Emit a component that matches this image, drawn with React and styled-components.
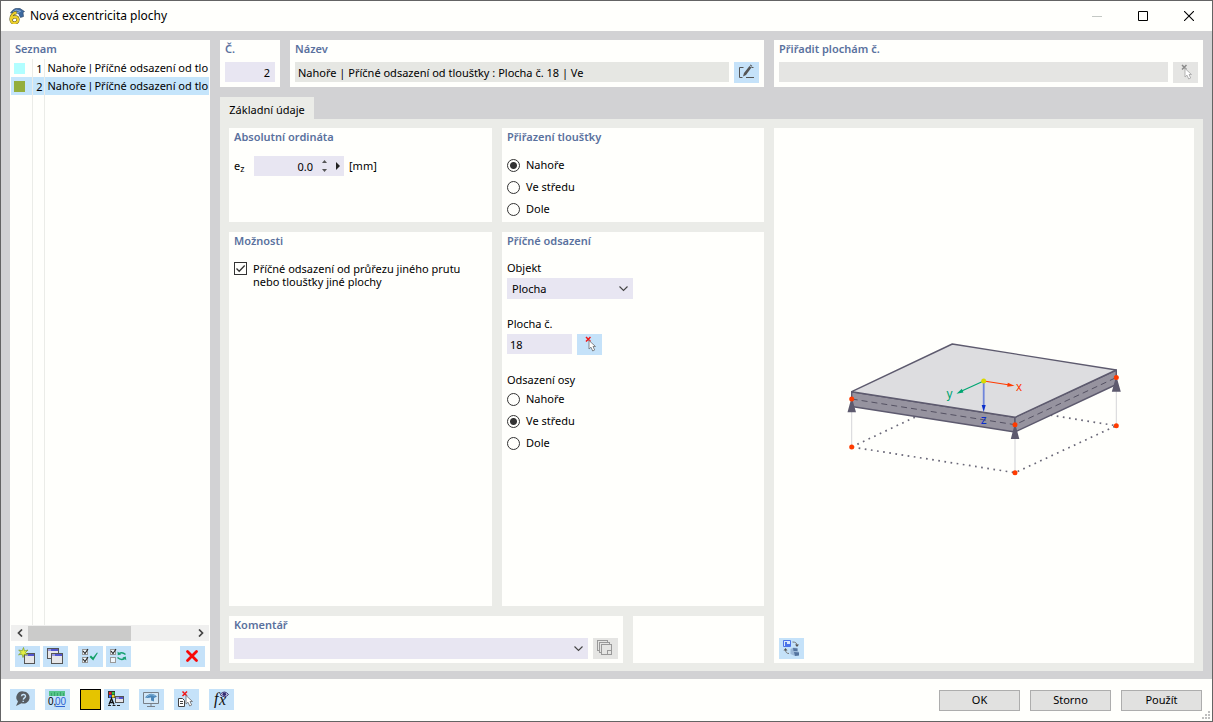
import React, { useState } from "react";
import styled, { createGlobalStyle } from "styled-components";

const GlobalStyle = createGlobalStyle`
  * {
    box-sizing: border-box;
  }

  body {
    margin: 0;
    color: #000;
    font-family: "Noto Sans", "Open Sans", sans-serif;
    font-size: 11px;
    line-height: 14px;
  }

  button,
  input,
  select {
    font: inherit;
    color: inherit;
    border: 0;
    border-radius: 0;
    margin: 0;
    padding: 0;
  }
`;

const Window = styled.div`
  display: flex;
  flex-direction: column;
  min-height: 100vh;
  border: 1px solid #646464;
  background: #fffffc;
`;

const TitleBar = styled.header`
  display: flex;
  align-items: center;
  height: 30px;
  padding-left: 8px;
`;

const WindowTitle = styled.h1`
  flex: 1;
  margin: 0 0 0 5px;
  font-size: 12px;
  font-weight: normal;
`;

const WindowButton = styled.button`
  display: flex;
  align-items: center;
  justify-content: center;
  width: 46px;
  height: 30px;
  background: none;
`;

const Body = styled.main`
  flex: 1;
  display: flex;
  gap: 10px;
  padding: 9px;
  padding-bottom: 8px;
  background: #d2d2d4;
`;

const Columns = styled.div`
  flex: ${p => (p.$grow ? "1" : "none")};
  display: grid;
  grid-template-columns: ${p => p.$columns};
  gap: 10px;
  min-height: ${p => p.$height || "0"};
`;

const Panel = styled.section`
  display: flex;
  flex-direction: column;
  min-width: 0;
  padding: 0 5px;
  background: #fffffc;
`;

const PanelTitle = styled.h2`
  margin: 0;
  padding: 1px 0 3px;
  color: #5a719e;
  font-size: 11px;
  font-weight: 600;
  line-height: 15px;
`;

const ListPanel = styled(Panel)`
  flex: none;
  width: 200px;
  padding: 0 1px;
`;

const ListTitle = styled(PanelTitle)`
  padding-left: 4px;
`;

const ListArea = styled.div`
  flex: 1;
  display: flex;
  overflow: hidden;
`;

const List = styled.table`
  width: 198px;
  table-layout: fixed;
  border-collapse: collapse;
`;

const ListRow = styled.tr`
  height: ${p => (p.$filler ? "auto" : "18px")};
  background: ${p => (p.$selected ? "#c5e5fb" : "none")};
`;

const ListCell = styled.td`
  width: ${p => p.$width || "auto"};
  padding: 1px 0 0 3px;
  border-right: ${p => (p.$last ? "0" : "1px solid #ebece8")};
  white-space: nowrap;
  text-align: ${p => p.$align || "left"};
`;

const Bar = styled.span`
  font-family: Roboto, sans-serif;
`;

const Swatch = styled.span`
  display: block;
  width: 11px;
  height: 11px;
  background: ${p => p.$color};
`;

const ScrollBar = styled.div`
  display: flex;
  align-items: center;
  height: 16px;
  background: #f0f0ef;
`;

const ScrollButton = styled.button`
  display: flex;
  align-items: center;
  justify-content: center;
  width: 17px;
  height: 16px;
  background: none;
`;

const ScrollTrack = styled.div`
  flex: 1;
  height: 15px;
`;

const ScrollThumb = styled.div`
  width: 103px;
  height: 15px;
  background: #cbcbca;
`;

const ListTools = styled.div`
  display: flex;
  gap: 3px;
  padding: 5px 4px 4px;
`;

const IconButton = styled.button`
  flex: none;
  display: block;
  width: 25px;
  height: 21px;
  margin-left: ${p => p.$gap || "0"};
  background: ${p => (p.disabled ? "#e5e5e3" : "#c5e2f9")};

  svg {
    display: block;
  }
`;

const Content = styled.div`
  flex: 1;
  display: flex;
  flex-direction: column;
  min-width: 0;
`;

const FieldRow = styled.div`
  display: flex;
  gap: 5px;
  margin-top: 3px;
`;

const TextInput = styled.input`
  width: ${p => p.$width || "100%"};
  min-width: 0;
  height: 20px;
  padding: 0 5px 0 3px;
  outline: none;
  text-align: ${p => p.$align || "left"};
  background: ${p => p.$background || "#e8e6f2"};
`;

const Tabs = styled.div`
  display: flex;
  margin-top: 10px;
`;

const Tab = styled.button`
  width: 94px;
  height: 22px;
  padding-top: 3px;
  background: #ebece8;
`;

const TabPage = styled.div`
  flex: 1;
  display: flex;
  flex-direction: column;
  padding: 9px 9px 8px;
  background: #ebece8;
`;

const Form = styled.div`
  display: flex;
  flex-direction: column;
  gap: 10px;
`;

const OrdinateRow = styled.div`
  display: flex;
  align-items: center;
  margin-top: 9px;
`;

const OrdinateLabel = styled.label`
  width: 20px;

  sub {
    font-size: 9px;
    line-height: 8px;
    vertical-align: -2px;
  }
`;

const Spinner = styled.div`
  display: flex;
  align-items: center;
  width: 90px;
  margin-right: 5px;
  background: #e8e6f2;
`;

const SpinnerButtons = styled.div`
  display: flex;
  flex-direction: column;
  width: 13px;
`;

const ArrowButton = styled.button`
  display: flex;
  align-items: center;
  justify-content: center;
  width: 13px;
  height: ${p => (p.$half ? "9px" : "18px")};
  background: none;
`;

const Choices = styled.div`
  display: flex;
  flex-direction: column;
  margin-top: ${p => p.$top || "0"};
`;

const Choice = styled.label`
  display: flex;
  align-items: center;
  gap: 6px;
  height: 22px;
`;

const Radio = styled.input`
  appearance: none;
  width: 13px;
  height: 13px;
  border: 1px solid #333;
  border-radius: 50%;
  background: ${p => (p.checked ? "radial-gradient(circle, #333 3px, #fffffc 4px)" : "#fffffc")};
`;

const CheckLabel = styled.label`
  display: flex;
  gap: 6px;
  margin-top: 11px;
  line-height: 13px;

  span {
    width: 216px;
  }
`;

const CheckBox = styled.input`
  flex: none;
  appearance: none;
  width: 13px;
  height: 13px;
  border: 1px solid #333;
  background: #fffffc;

  &:checked {
    background: url("data:image/svg+xml,%3Csvg xmlns='http://www.w3.org/2000/svg' viewBox='0 0 11 11'%3E%3Cpath d='M1.5 5.5l2.7 2.8L9.7 2.5' fill='none' stroke='%23333' stroke-width='1.3'/%3E%3C/svg%3E");
  }
`;

const FieldLabel = styled.label`
  display: block;
  margin-top: ${p => p.$top || "0"};
  line-height: 15px;
`;

const Select = styled.select`
  appearance: none;
  width: ${p => p.$width || "100%"};
  min-width: 0;
  height: 21px;
  padding: 1px 20px 0 5px;
  outline: none;
  background: #e8e6f2
    url("data:image/svg+xml,%3Csvg xmlns='http://www.w3.org/2000/svg' width='9' height='6'%3E%3Cpath d='M.5.5l4 4 4-4' fill='none' stroke='%23444' stroke-width='1.1'/%3E%3C/svg%3E")
    no-repeat right 5px center;
`;

const Preview = styled(Panel)`
  justify-content: space-between;
  padding-bottom: 4px;
`;

const Drawing = styled.div`
  flex: 1;
  display: flex;
  align-items: center;
  justify-content: center;
`;

const Footer = styled.footer`
  position: relative;
  display: flex;
  align-items: center;
  gap: 10px;
  height: 42px;
  padding: 0 10px 0 9px;
`;

const Tools = styled.div`
  flex: 1;
  display: flex;
  gap: 10px;
  padding-bottom: 2px;
`;

const ToolGroup = styled.div`
  display: flex;
  gap: 3px;
`;

const ColorButton = styled.button`
  width: 21px;
  height: 21px;
  border: 1px solid #000;
  background: #e5c400;
`;

const DialogButton = styled.button`
  width: 81px;
  height: 21px;
  border: 1px solid #adadad;
  background: #e1e1e0;
`;

const Grip = styled.svg`
  position: absolute;
  right: 2px;
  bottom: 2px;
`;

const Icon = ({ children }) => (
  <svg width="25" height="21" viewBox="0 0 25 21" aria-hidden="true">
    {children}
  </svg>
);

const AppIcon = () => (
  <svg width="16" height="16" viewBox="0 0 16 16" aria-hidden="true">
    <path d="M1.500 5Q5-1 11 .5l4.500 3-1.500 1 .5 4-3 1-2-4-5-1z" fill="#3d6aa0" stroke="#29405e" strokeWidth=".6" />
    <path d="M4 4l3-2 4 1M8 5l4-2" stroke="#9dbbe0" fill="none" strokeWidth=".8" />
    <path
      d="M7.500 4.700C4 5 2 8 2 11c0 2.500 1.500 4 3.300 4 2.200 0 3.700-1.500 3.700-3.500S7.500 8.800 6 8.800C4.500 8.800 3 10 2.700 11"
      fill="none"
      stroke="#5f5a20"
      strokeWidth="3.200"
    />
    <path
      d="M7.500 4.700C4 5 2 8 2 11c0 2.500 1.500 4 3.300 4 2.200 0 3.700-1.500 3.700-3.500S7.500 8.800 6 8.800C4.500 8.800 3 10 2.700 11"
      fill="none"
      stroke="#edd02b"
      strokeWidth="2.200"
    />
  </svg>
);

const MiniWindow = ({ x, y, w = 11, h = 11 }) => (
  <g shapeRendering="crispEdges">
    <rect x={x + 0.5} y={y + 0.5} width={w - 1} height={h - 1} fill="#e6e6e8" stroke="#555" />
    <rect x={x + 1} y={y + 1} width={w - 2} height="2" fill="#5356cf" />
    <rect x={x + 1} y={y + 1} width="3" height="2" fill="#9b9ce0" />
  </g>
);

const TickBox = ({ y, checked }) => (
  <g fill="none">
    <rect x="4.500" y={y + 0.5} width="5" height="5" fill="#eef6fc" stroke="#999" />
    {checked && <path d={`M5 ${y + 2}l2 2.500 3-4.500`} stroke="#222" strokeWidth="1.100" />}
  </g>
);

const PickIcon = ({ disabled }) => (
  <Icon>
    <path d="M9 3l4.500 4.500M13.500 3L9 7.500" stroke={disabled ? "#8a8a8a" : "#f21616"} strokeWidth="1.500" />
    <path
      d="M12 6.500v8.500l2-1.800 1.700 3.800 2-1-1.700-3.500h2.500z"
      fill="#fff"
      stroke={disabled ? "#aaa" : "#77797d"}
      strokeWidth=".9"
    />
  </Icon>
);

const EditIcon = () => (
  <Icon>
    <path d="M9.500 5.500h-4v10h3M12 15.500h8M17.500 5.500h2" fill="none" stroke="#555" />
    <path d="M9 14.500l1-3.500L15.500 4l2 1.500L12 13z" fill="#555" />
    <path d="M15.800 3.300l.8-.8 1.800 1.400-.6.900z" fill="#555" />
  </Icon>
);

const NewIcon = () => (
  <Icon>
    <MiniWindow x={9} y={7} />
    <path
      d="M8.500 1.500l1 3.500L13 4l-2.500 2.500L12.500 9 9.300 8.300 8 11.500 7 8.200l-3.500.6L6 6.500 3.700 4l3.500.8z"
      fill="#e3ef45"
      stroke="#7c9b24"
      strokeWidth=".7"
    />
  </Icon>
);

const CopyIcon = () => (
  <Icon>
    <MiniWindow x={4} y={2} w={12} />
    <MiniWindow x={8} y={7} w={12} />
  </Icon>
);

const CheckAllIcon = () => (
  <Icon>
    <TickBox y={3} checked />
    <TickBox y={11} checked />
    <path d="M11.500 11l1.500-1.500 2 2 4-5 .8.5L15.200 14.500z" fill="#12a066" />
  </Icon>
);

const InvertIcon = () => (
  <Icon>
    <TickBox y={3} checked />
    <TickBox y={11} />
    <path d="M19.500 8.500C17 6.300 15 6.300 13 7.700M11.500 11.500c2.500 2.300 5 2.300 7 1" fill="none" stroke="#16a070" strokeWidth="1.500" />
    <path d="M11.500 5.500l.3 3.700 3.300-.7zM20.300 14.300l-.5-3.700-3.300 1z" fill="#16a070" />
  </Icon>
);

const DeleteIcon = () => (
  <Icon>
    <path d="M7.500 5.500l9 9M16.500 5.500l-9 9" stroke="#f80808" strokeWidth="2.800" strokeLinecap="round" />
  </Icon>
);

const NotesIcon = () => (
  <Icon>
    <g fill="#e5e5e3" stroke="#999" shapeRendering="crispEdges">
      <path d="M4.500 2.500h10v10h-10z" />
      <path d="M6.500 4.500h10v10h-10z" />
      <path d="M8.500 6.500h10v10h-10z" />
      <path d="M14.500 16.500v-4h4" />
    </g>
  </Icon>
);

const ViewIcon = () => (
  <Icon>
    <path d="M4.500 2.500h7v6h-7z" fill="#d9e9fb" stroke="#4b73e8" />
    <path d="M6 4h2v2h3v2H6z" fill="#4b73e8" />
    <path d="M13.500 4c3 0 4.500 1 4.500 3.500M10 15.500c-2.500 0-3.500-1.500-3.500-4" fill="none" stroke="#777" />
    <path d="M16 6.500h4L18 9zM4.500 12.500h4l-2-2.500z" fill="#555" />
    <path d="M11.500 11l3-1.500 4 .5v3l1.500 1v3l-4 1-4.500-2z" fill="#9db9d8" />
    <path d="M14 10l4.500.5v2.500h-4zM15 14l5 .5v3l-4 .5z" fill="#54749f" />
  </Icon>
);

const HelpIcon = () => (
  <Icon>
    <path d="M13.500 2.500a6.200 6 0 1 1-2 11.700L6 17l2-4.500A6 6 0 0 1 13.500 2.500z" fill="#575d63" />
    <path d="M11.500 7.200c.2-2.500 4.300-2.200 4 .2-.2 1.500-2 1.500-2.200 3.200M13.200 11.700v1.300" fill="none" stroke="#c5e2f9" strokeWidth="1.400" />
  </Icon>
);

const UnitsText = styled.text`
  font: 10px "Liberation Sans", sans-serif;
`;

const UnitsIcon = () => (
  <Icon>
    <path d="M4 2h16v5H4z" fill="#55c589" />
    <path d="M6.500 4v3M9.500 3v4M12.500 4v3M15.500 3v4M18.500 4v3" stroke="#3aa56d" />
    <UnitsText x="3" y="16">0,</UnitsText>
    <UnitsText x="10" y="16" fill="#2e63d0">00</UnitsText>
    <path d="M10.500 17.500H20" stroke="#2e63d0" />
  </Icon>
);

const DisplayIcon = () => (
  <Icon>
    <path d="M4 2h7v7H4z" fill="#333" />
    <path d="M5 3h2.500v2.500H5z" fill="#e22" />
    <path d="M8 3h2.500v2.500H8z" fill="#2cc33a" />
    <path d="M5 6h2.500v2.500H5z" fill="#36f" />
    <path d="M8 6h2.500v2.500H8z" fill="#f2d51e" />
    <path d="M5 15.500l2.500-6 2.500 6M6 13.500h3" fill="none" stroke="#111" strokeWidth="1.300" />
    <path d="M4 16.500h3M8.500 16.500h3M13 16.500h3" stroke="#222" />
    <MiniWindow x={11} y={7} w={9} h={7} />
  </Icon>
);

const MonitorIcon = () => (
  <Icon>
    <path d="M4.500 3.500h15v11h-15z" fill="#d2e7f7" stroke="#777f88" />
    <path d="M12 15v2M8 17.500h8" stroke="#777f88" fill="none" />
    <path d="M6 8.500Q12 1.500 18 7.500l-3 1.500v3.500l-3-1V8.500L8.500 9z" fill="#4c86b8" />
    <path d="M7.500 8Q12 4 16 7" fill="none" stroke="#85b6dc" />
  </Icon>
);

const PickListIcon = () => (
  <Icon>
    <path d="M8.500 2.500l4.500 4.500M13 2.500L8.500 7" stroke="#f21616" strokeWidth="1.500" />
    <path d="M4.500 9.500h4l2 2v6h-6z" fill="#fff" stroke="#444" />
    <path d="M6 12.500h3M6 14.500h3" stroke="#444" />
    <path d="M12 6.500v8.500l2-1.800 1.700 3.800 2-1-1.700-3.500h2.500z" fill="#fff" stroke="#77797d" strokeWidth=".9" />
  </Icon>
);

const FormulaText = styled.text`
  font: italic 16px "Liberation Serif", serif;
`;

const FormulaIcon = () => (
  <Icon>
    <FormulaText x="5" y="15" fill="#111">f</FormulaText>
    <FormulaText x="10" y="16" fill="#111">x</FormulaText>
    <path d="M11 5.500q4.500-5 8.500 0-4 4.500-8.500 0z" fill="#c9cbe8" stroke="#403a78" />
    <circle cx="15.300" cy="5.300" r="1.800" fill="#312a72" />
  </Icon>
);

const AxisText = styled.text`
  font: 12px "Liberation Sans", sans-serif;
  text-anchor: middle;
`;

const SlabDrawing = () => (
  <svg width="308" height="214" viewBox="0 -54 308 214" role="img" aria-label="Excentricita plochy">
    <path
      d="M21.700 117L122.300 69.500 286.300 95.700 185 142.700z"
      fill="none"
      stroke="#6a6878"
      strokeWidth="1.700"
      strokeDasharray="1.700 4.500"
    />
    <path d="M21.700 69v48M185 95v47.500M286.300 48v47.500" stroke="#d5d5d8" />
    <g stroke="#5d5a6e" strokeWidth="1.400" strokeLinejoin="round">
      <path d="M21.700 61.700L185 87.300v14.700L21.700 76.500z" fill="#96939f" />
      <path d="M185 87.300L286.300 40v14.500L185 102z" fill="#96939f" />
      <path d="M21.700 61.700L122.300 14l164 26L185 87.300z" fill="#dddde0" />
    </g>
    <path d="M21.700 69L185 94.700l101.300-47.200" fill="none" stroke="#555263" strokeDasharray="6 4" />
    <path d="M21.700 67l4.300 15.300h-8.500zM185 93l4.300 16h-8.500zM286.300 46l4.500 15.800h-9z" fill="#5d5a6e" />
    <g fill="#ff3b00">
      <circle cx="21.700" cy="69" r="2.500" />
      <circle cx="185" cy="94.700" r="2.500" />
      <circle cx="286.300" cy="47.500" r="2.500" />
      <circle cx="21.700" cy="117" r="2.500" />
      <circle cx="185" cy="142.700" r="2.500" />
      <circle cx="286.300" cy="95.700" r="2.500" />
    </g>
    <path d="M153.700 51l26 4" stroke="#ff3b00" strokeWidth="1.200" />
    <path d="M184.500 55.800l-7.300 1 .6-4z" fill="#ff3b00" />
    <path d="M153.700 51l-22 10" stroke="#00a572" strokeWidth="1.200" />
    <path d="M126.500 63.800l5.300-5 1.700 3.800z" fill="#00a572" />
    <path d="M153.700 51v25" stroke="#6f85da" strokeWidth="1.800" />
    <path d="M153.700 82l-2-7h4z" fill="#0a2ecb" />
    <circle cx="153.700" cy="51" r="2.500" fill="#d9d900" />
    <AxisText x="189" y="61" fill="#ff3b00">x</AxisText>
    <AxisText x="119.500" y="68" fill="#00a572">y</AxisText>
    <AxisText x="153.700" y="94" fill="#0a2ecb">z</AxisText>
  </svg>
);

const ITEMS = [
  { id: 1, color: "#b1feff", position: "Nahoře", name: "Příčné odsazení od tlo" },
  { id: 2, color: "#94ae3d", position: "Nahoře", name: "Příčné odsazení od tlo" }
];

const POSITIONS = ["Nahoře", "Ve středu", "Dole"];

const RadioList = ({ name, value, onChange, top }) => (
  <Choices $top={top}>
    {POSITIONS.map(position => (
      <Choice key={position}>
        <Radio type="radio" name={name} checked={value === position} onChange={() => onChange(position)} />
        {position}
      </Choice>
    ))}
  </Choices>
);

const App = () => {
  const [selected, setSelected] = useState(2);
  const [thickness, setThickness] = useState("Nahoře");
  const [axis, setAxis] = useState("Ve středu");

  return (
    <Window>
      <GlobalStyle />
      <TitleBar>
        <AppIcon />
        <WindowTitle>Nová excentricita plochy</WindowTitle>
        <WindowButton aria-label="Minimalizovat" disabled>
          <svg width="10" height="10"><path d="M0 5.500h10" stroke="#c4c8c4" /></svg>
        </WindowButton>
        <WindowButton aria-label="Maximalizovat">
          <svg width="10" height="10"><path d="M.5.5h9v9h-9z" fill="none" stroke="#000" /></svg>
        </WindowButton>
        <WindowButton aria-label="Zavřít">
          <svg width="10" height="10"><path d="M0 0l10 10M10 0L0 10" stroke="#000" strokeWidth="1.100" /></svg>
        </WindowButton>
      </TitleBar>

      <Body>
        <ListPanel>
          <ListTitle>Seznam</ListTitle>
          <ListArea>
            <List>
              <tbody>
                {ITEMS.map(item => (
                  <ListRow key={item.id} $selected={item.id === selected} onClick={() => setSelected(item.id)}>
                    <ListCell $width="21px"><Swatch $color={item.color} /></ListCell>
                    <ListCell $width="12px" $align="center">{item.id}</ListCell>
                    <ListCell $last>{item.position} <Bar>|</Bar> {item.name}</ListCell>
                  </ListRow>
                ))}
                <ListRow $filler>
                  <ListCell />
                  <ListCell />
                  <ListCell $last />
                </ListRow>
              </tbody>
            </List>
          </ListArea>
          <ScrollBar>
            <ScrollButton aria-label="Posunout vlevo">
              <svg width="6" height="8"><path d="M5 .5L1.500 4 5 7.500" fill="none" stroke="#444" strokeWidth="1.700" /></svg>
            </ScrollButton>
            <ScrollTrack><ScrollThumb /></ScrollTrack>
            <ScrollButton aria-label="Posunout vpravo">
              <svg width="6" height="8"><path d="M1 .5L4.500 4 1 7.500" fill="none" stroke="#444" strokeWidth="1.700" /></svg>
            </ScrollButton>
          </ScrollBar>
          <ListTools>
            <IconButton aria-label="Nový"><NewIcon /></IconButton>
            <IconButton aria-label="Kopírovat"><CopyIcon /></IconButton>
            <IconButton aria-label="Vybrat vše" $gap="7px"><CheckAllIcon /></IconButton>
            <IconButton aria-label="Obrátit výběr"><InvertIcon /></IconButton>
            <IconButton aria-label="Smazat" $gap="auto"><DeleteIcon /></IconButton>
          </ListTools>
        </ListPanel>

        <Content>
          <Columns $columns="60px 474fr 429fr" $height="47px">
            <Panel>
              <PanelTitle as="label" htmlFor="number">Č.</PanelTitle>
              <FieldRow>
                <TextInput id="number" defaultValue="2" $align="right" />
              </FieldRow>
            </Panel>
            <Panel>
              <PanelTitle as="label" htmlFor="name">Název</PanelTitle>
              <FieldRow>
                <TextInput
                  id="name"
                  readOnly
                  value="Nahoře | Příčné odsazení od tloušťky : Plocha č. 18 | Ve"
                  $background="#e6e7e3"
                />
                <IconButton aria-label="Upravit název"><EditIcon /></IconButton>
              </FieldRow>
            </Panel>
            <Panel>
              <PanelTitle as="label" htmlFor="assign">Přiřadit plochám č.</PanelTitle>
              <FieldRow>
                <TextInput id="assign" disabled $background="#e5e5e3" />
                <IconButton aria-label="Vybrat plochy" disabled><PickIcon disabled /></IconButton>
              </FieldRow>
            </Panel>
          </Columns>

          <Tabs>
            <Tab>Základní údaje</Tab>
          </Tabs>

          <TabPage>
            <Columns $columns="535fr 420fr" $grow>
              <Form>
                <Columns $columns="263fr 262fr" $height="94px">
                  <Panel>
                    <PanelTitle>Absolutní ordináta</PanelTitle>
                    <OrdinateRow>
                      <OrdinateLabel htmlFor="ez">e<sub>z</sub></OrdinateLabel>
                      <Spinner>
                        <TextInput id="ez" defaultValue="0.0" $align="right" $width="64px" />
                        <SpinnerButtons>
                          <ArrowButton $half aria-label="Zvýšit">
                            <svg width="5" height="3"><path d="M0 3l2.500-3L5 3z" fill="#555" /></svg>
                          </ArrowButton>
                          <ArrowButton $half aria-label="Snížit">
                            <svg width="5" height="3"><path d="M0 0l2.500 3L5 0z" fill="#555" /></svg>
                          </ArrowButton>
                        </SpinnerButtons>
                        <ArrowButton aria-label="Další">
                          <svg width="4" height="8"><path d="M0 0l4 4-4 4z" fill="#222" /></svg>
                        </ArrowButton>
                      </Spinner>
                      [mm]
                    </OrdinateRow>
                  </Panel>
                  <Panel>
                    <PanelTitle>Přiřazení tloušťky</PanelTitle>
                    <RadioList name="thickness" value={thickness} onChange={setThickness} top="7px" />
                  </Panel>
                </Columns>

                <Columns $columns="263fr 262fr" $grow>
                  <Panel>
                    <PanelTitle>Možnosti</PanelTitle>
                    <CheckLabel>
                      <CheckBox type="checkbox" defaultChecked />
                      <span>Příčné odsazení od průřezu jiného prutu nebo tloušťky jiné plochy</span>
                    </CheckLabel>
                  </Panel>
                  <Panel>
                    <PanelTitle>Příčné odsazení</PanelTitle>
                    <FieldLabel htmlFor="object" $top="9px">Objekt</FieldLabel>
                    <FieldRow>
                      <Select id="object" $width="126px">
                        <option>Plocha</option>
                      </Select>
                    </FieldRow>
                    <FieldLabel htmlFor="surface" $top="17px">Plocha č.</FieldLabel>
                    <FieldRow>
                      <TextInput id="surface" defaultValue="18" $width="65px" />
                      <IconButton aria-label="Vybrat plochu"><PickIcon /></IconButton>
                    </FieldRow>
                    <FieldLabel as="div" $top="17px">Odsazení osy</FieldLabel>
                    <RadioList name="axis" value={axis} onChange={setAxis} top="1px" />
                  </Panel>
                </Columns>

                <Columns $columns="394fr 131fr" $height="47px">
                  <Panel>
                    <PanelTitle as="label" htmlFor="comment">Komentář</PanelTitle>
                    <FieldRow>
                      <Select id="comment" />
                      <IconButton aria-label="Komentáře" disabled><NotesIcon /></IconButton>
                    </FieldRow>
                  </Panel>
                  <Panel />
                </Columns>
              </Form>

              <Preview>
                <Drawing><SlabDrawing /></Drawing>
                <IconButton aria-label="Zobrazení"><ViewIcon /></IconButton>
              </Preview>
            </Columns>
          </TabPage>
        </Content>
      </Body>

      <Footer>
        <Tools>
          <IconButton aria-label="Nápověda"><HelpIcon /></IconButton>
          <IconButton aria-label="Jednotky"><UnitsIcon /></IconButton>
          <ToolGroup>
            <ColorButton aria-label="Barva" />
            <IconButton aria-label="Vlastnosti zobrazení"><DisplayIcon /></IconButton>
          </ToolGroup>
          <IconButton aria-label="Náhled"><MonitorIcon /></IconButton>
          <IconButton aria-label="Výběr ze seznamu"><PickListIcon /></IconButton>
          <IconButton aria-label="Vzorce"><FormulaIcon /></IconButton>
        </Tools>
        <DialogButton>OK</DialogButton>
        <DialogButton>Storno</DialogButton>
        <DialogButton>Použít</DialogButton>
        <Grip width="8" height="8" aria-hidden="true">
          <path d="M6 0h2v2H6zM3 3h2v2H3zM6 3h2v2H6zM0 6h2v2H0zM3 6h2v2H3zM6 6h2v2H6z" fill="#bfbfbf" />
        </Grip>
      </Footer>
    </Window>
  );
};

export default App;
